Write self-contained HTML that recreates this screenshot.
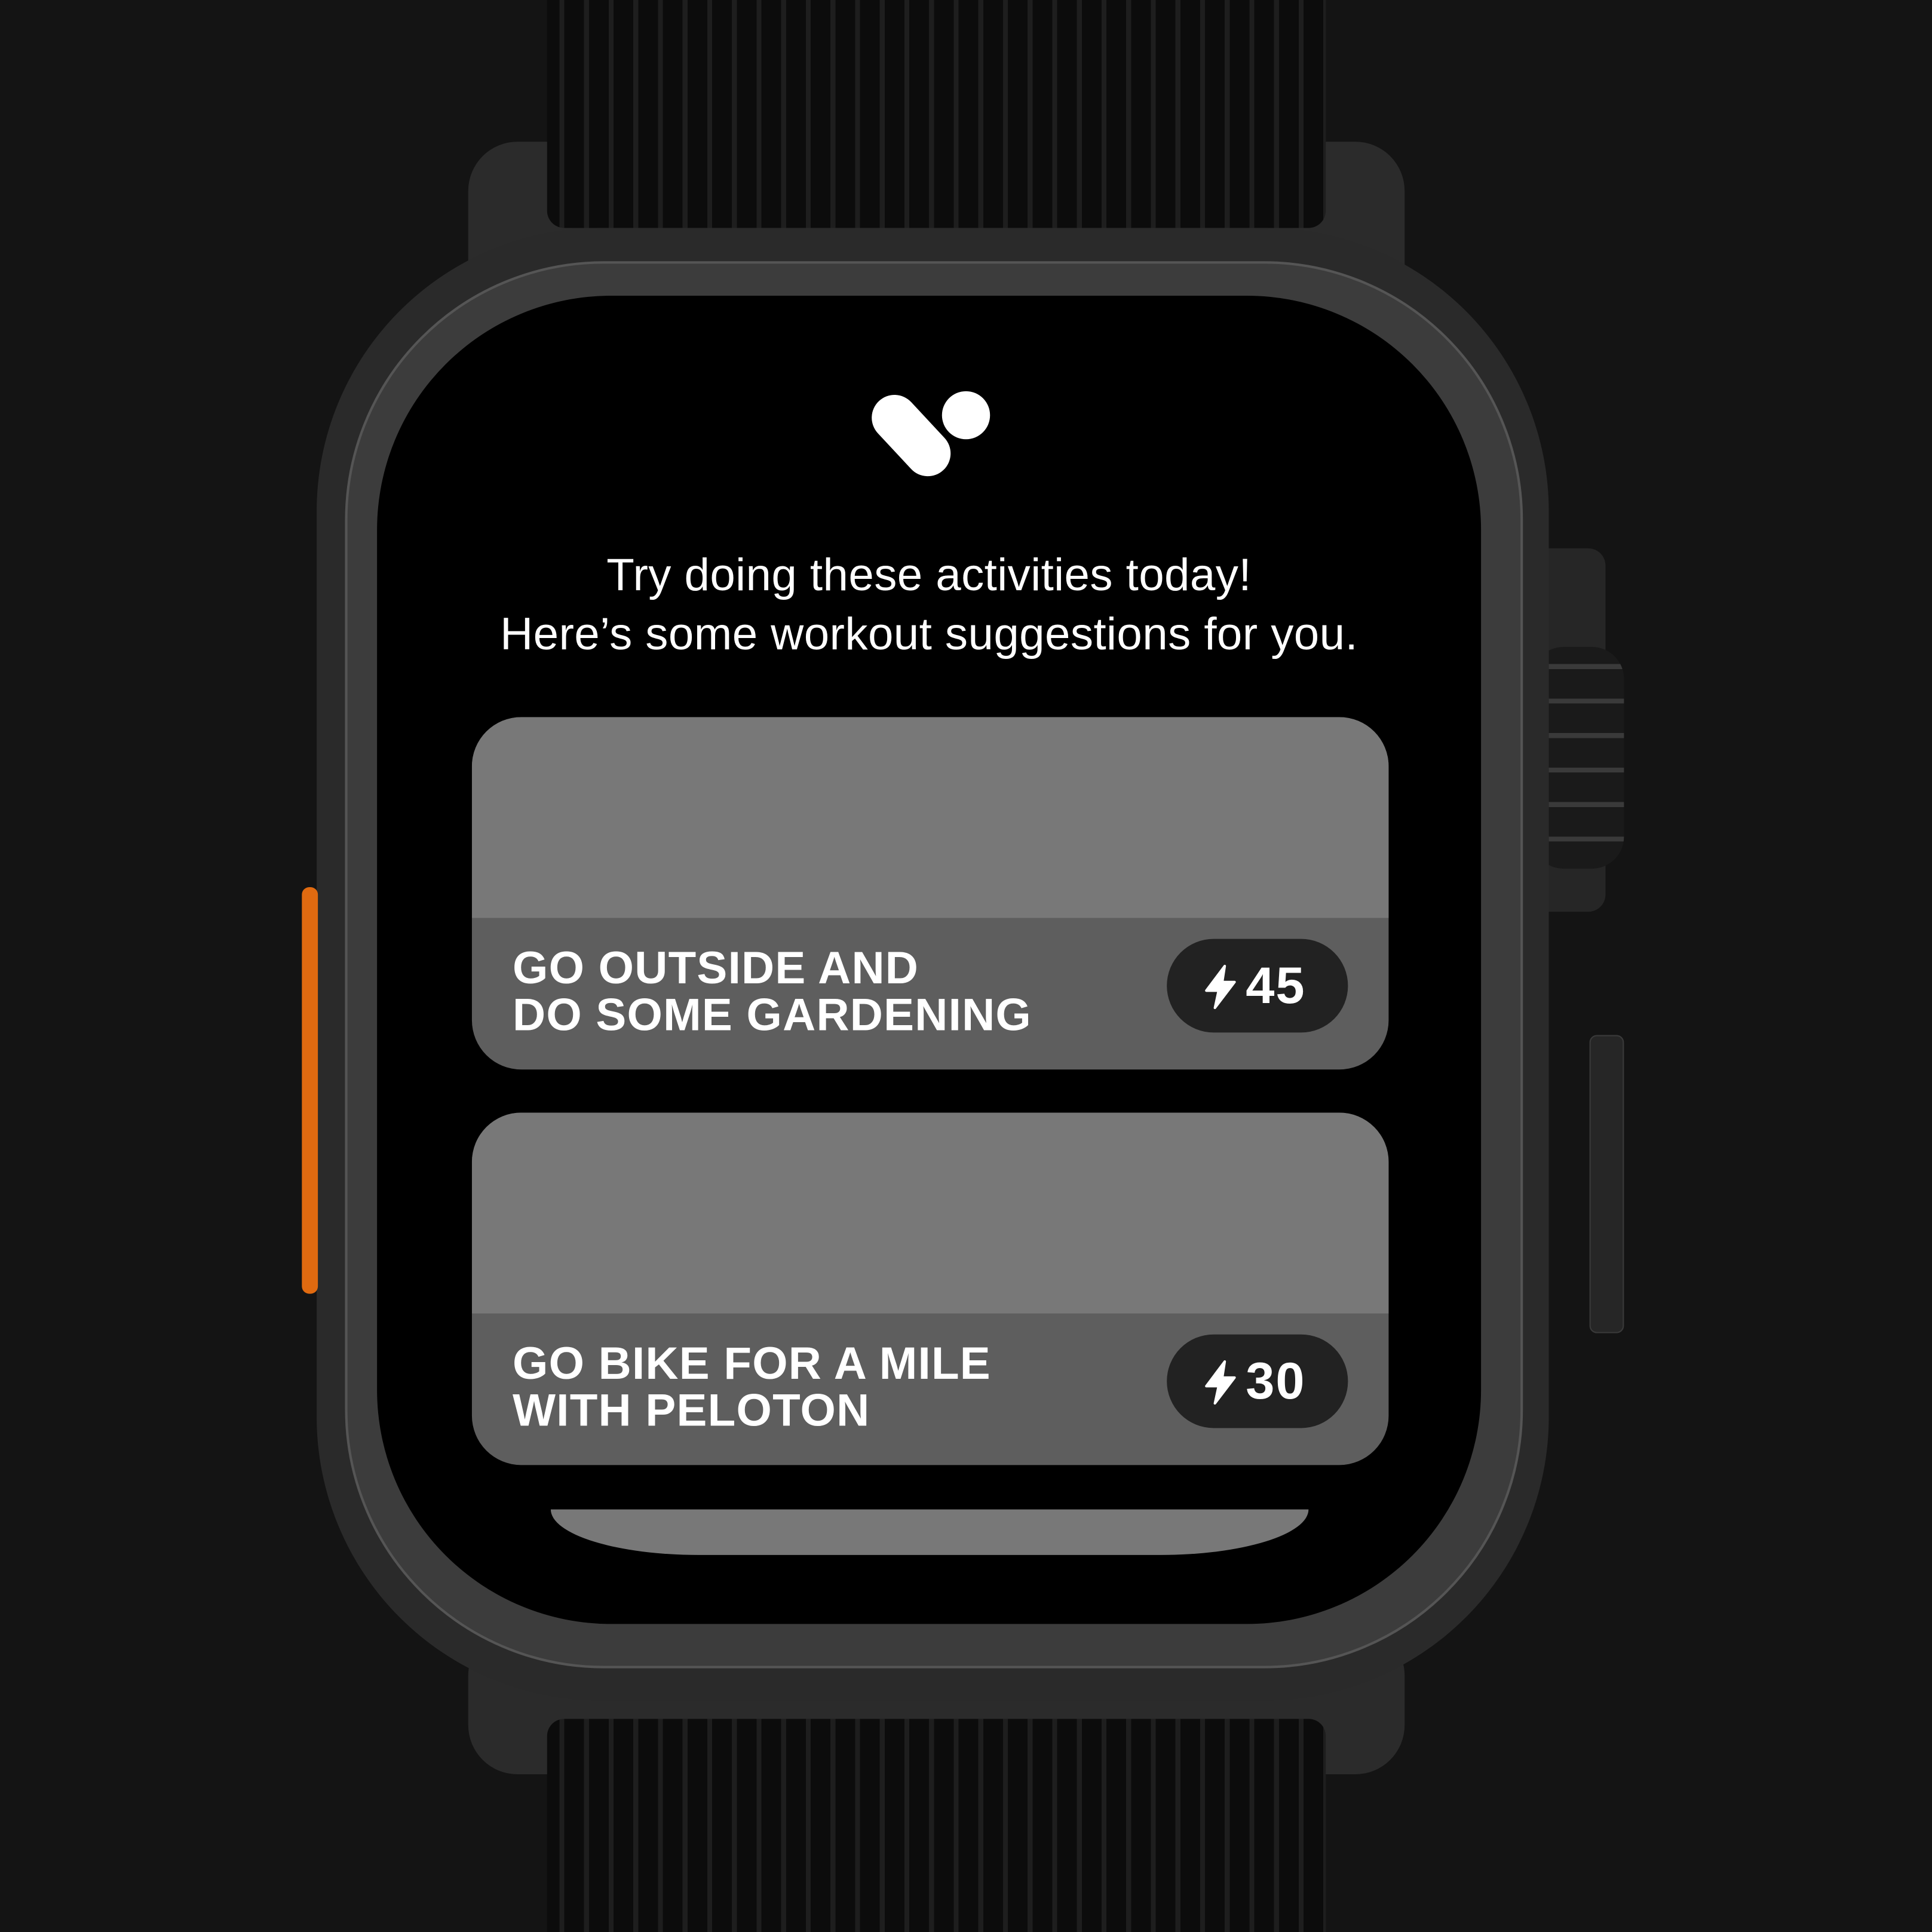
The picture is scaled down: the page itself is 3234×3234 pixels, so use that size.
<!DOCTYPE html>
<html><head><meta charset="utf-8"><style>
html,body{margin:0;padding:0;background:#141414;}
body{width:3234px;height:3234px;overflow:hidden;position:relative;}
#s{position:absolute;left:0;top:0;width:1568px;height:1568px;transform:scale(2.0625);transform-origin:0 0;font-family:"Liberation Sans",sans-serif;}
.a{position:absolute;}
.strap{background:repeating-linear-gradient(90deg,#0c0c0c 0 10px,#1e1e1e 10px 14px,#0c0c0c 14px 20px);}
.card{position:absolute;left:383px;width:744px;height:286px;border-radius:40px;overflow:hidden;background:#5e5e5e;}
.card .top{position:absolute;left:0;top:0;right:0;height:163px;background:#787878;}
.card .t{position:absolute;left:33px;top:185px;color:#fff;font-weight:bold;font-size:37px;line-height:38px;letter-spacing:0.6px;}
.badge{position:absolute;left:564px;top:180px;width:147px;height:76px;border-radius:38px;background:#222;color:#fff;font-weight:bold;font-size:42px;line-height:76px;letter-spacing:1px;}
.badge svg{position:absolute;left:30px;top:21px;}
.badge span{position:absolute;left:64px;top:0;}
</style></head><body><div id="s">
<div class="a strap" style="left:444px;top:0;width:632px;height:190px;border-radius:0 0 10px 10px;"></div>
<div class="a strap" style="left:444px;top:1380px;width:632px;height:188px;"></div>
<div class="a" style="left:380px;top:115px;width:760px;height:140px;border-radius:40px;background:#2b2b2b;"></div>
<div class="a strap" style="left:444px;top:0;width:632px;height:185px;border-radius:0 0 14px 14px;"></div>
<div class="a" style="left:380px;top:1320px;width:760px;height:120px;border-radius:40px;background:#2b2b2b;"></div>
<div class="a strap" style="left:444px;top:1395px;width:632px;height:173px;border-radius:14px 14px 0 0;"></div>
<div class="a" style="left:1235px;top:445px;width:68px;height:295px;border-radius:14px;background:#262626;"></div>
<div class="a" style="left:1243px;top:525px;width:75px;height:180px;border-radius:26px;background:repeating-linear-gradient(180deg,#1a1a1a 0 14px,#3a3a3a 14px 18px,#1a1a1a 18px 28px);"></div>
<div class="a" style="left:1290px;top:840px;width:26px;height:240px;border-radius:6px;background:#262626;border:1px solid #3a3a3a;"></div>
<div class="a" style="left:257px;top:185px;width:1000px;height:1195px;border-radius:230px;background:#2a2a2a;"></div>
<div class="a" style="left:280px;top:212px;width:956px;height:1142px;border-radius:210px;background:#3c3c3c;border:2px solid #555;box-sizing:border-box;"></div>
<div class="a" style="left:245px;top:720px;width:13px;height:330px;border-radius:6px;background:#e06a10;"></div>
<div class="a" style="left:306px;top:240px;width:896px;height:1078px;border-radius:190px;background:#000;overflow:hidden;">
  <svg class="a" style="left:390px;top:72px" width="120" height="90" viewBox="390 72 120 90">
    <line x1="420" y1="99" x2="447" y2="128" stroke="#fff" stroke-width="37" stroke-linecap="round"/>
    <circle cx="478" cy="97" r="19.5" fill="#fff"/>
  </svg>
  <div class="a" style="left:0;width:896px;top:203px;text-align:center;color:#fff;font-size:37px;line-height:48px;letter-spacing:0.2px;">Try doing these activities today!<br>Here’s some workout suggestions for you.</div>
  <div class="a" style="left:141px;top:985px;width:615px;height:37px;background:#787878;border-radius:0 0 120px 120px / 0 0 37px 37px;"></div>
</div>
<div class="card" style="top:582px;"><div class="top"></div><div class="t">GO OUTSIDE AND<br>DO SOME GARDENING</div>
<div class="badge"><svg width="28" height="36" viewBox="0 0 28 36"><path d="M17 1 L2 21 L12 21 L9 35 L25 14 L15 14 Z" fill="#fff" stroke="#fff" stroke-width="2" stroke-linejoin="round"/></svg><span>45</span></div></div>
<div class="card" style="top:903px;"><div class="top"></div><div class="t">GO BIKE FOR A MILE<br>WITH PELOTON</div>
<div class="badge"><svg width="28" height="36" viewBox="0 0 28 36"><path d="M17 1 L2 21 L12 21 L9 35 L25 14 L15 14 Z" fill="#fff" stroke="#fff" stroke-width="2" stroke-linejoin="round"/></svg><span>30</span></div></div>
</div></body></html>
